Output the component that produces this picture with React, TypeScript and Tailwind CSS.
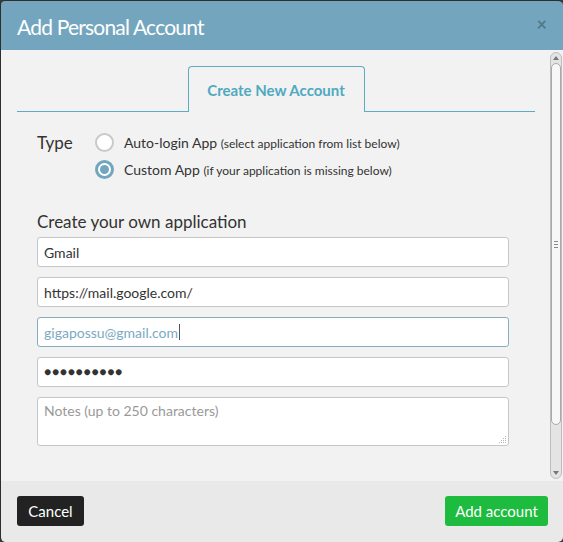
import React from "react";

function Radio({ checked }: { checked?: boolean }) {
  if (checked) {
    return (
      <span className="flex h-[19px] w-[19px] items-center justify-center rounded-full border-[3px] border-[#72a6be] bg-white">
        <span className="h-[9px] w-[9px] rounded-full bg-[#72a6be]" />
      </span>
    );
  }
  return <span className="block h-[19px] w-[19px] rounded-full border-2 border-[#c9c9c9] bg-white" />;
}

export default function App() {
  const font = { fontFamily: "Lato, 'Open Sans', sans-serif" };
  return (
    <div className="h-[542px] w-[563px] bg-[#3a3a3a]" style={font}>
      <div className="flex h-[542px] w-[563px] flex-col overflow-hidden rounded-[5px] border-l border-t border-[#2e2e2e]">
        {/* Header */}
        <div className="flex h-[49px] shrink-0 items-center justify-between bg-[#73a6be] pl-[16px] pr-[16px]">
          <span className="mt-[2px] text-[21px] tracking-[-0.8px] text-white">Add Personal Account</span>
          <span className="mt-[-4px] text-[18px] font-bold leading-none text-[#4f7a8e]">×</span>
        </div>

        {/* Body */}
        <div className="flex h-[431px] shrink-0 bg-[#f2f2f2]">
          <div className="flex-1 pl-[16px] pr-[15px] pt-[16px]">
            {/* Tab row */}
            <div className="flex items-end">
              <div className="h-[1px] flex-1 bg-[#5eacc3]" />
              <div className="flex h-[46px] w-[177px] items-center justify-center rounded-t-[4px] border border-b-0 border-[#5eacc3] pt-[1px]">
                <span className="text-[15px] font-bold text-[#4fa9c1]">Create New Account</span>
              </div>
              <div className="h-[1px] flex-1 bg-[#5eacc3]" />
            </div>

            {/* Type */}
            <div className="mt-[20px] flex pl-[20px]">
              <div className="w-[58px] pt-[1px] text-[17px] leading-[20px] text-[#333]">Type</div>
              <div className="flex flex-col gap-[6px]">
                <div className="flex items-center gap-[10px]">
                  <Radio />
                  <span className="text-[14px] text-[#333]">
                    Auto-login App <span className="text-[12px]">(select application from list below)</span>
                  </span>
                </div>
                <div className="flex items-center gap-[10px]">
                  <Radio checked />
                  <span className="text-[14px] text-[#333]">
                    Custom App <span className="text-[12px]">(if your application is missing below)</span>
                  </span>
                </div>
              </div>
            </div>

            {/* Create your own */}
            <div className="mt-[31px] pl-[20px]">
              <div className="text-[17px] leading-[22px] text-[#333]">Create your own application</div>
              <div className="mt-[4px] flex w-[472px] flex-col gap-[10px]">
                <div className="flex h-[30px] items-center rounded-[3px] border border-[#c4c6c9] bg-white px-[6px] text-[14px] text-[#333]">
                  Gmail
                </div>
                <div className="flex h-[30px] items-center rounded-[3px] border border-[#c4c6c9] bg-white px-[6px] text-[14px] text-[#333]">
                  https://mail.google.com/
                </div>
                <div className="flex h-[30px] items-center rounded-[3px] border border-[#8aadbf] bg-white px-[6px] text-[14px] text-[#7ba9c2]">
                  gigapossu@gmail.com
                  <span className="ml-[1px] inline-block h-[16px] w-[1px] bg-[#555]" />
                </div>
                <div className="flex h-[30px] items-center rounded-[3px] border border-[#c4c6c9] bg-white px-[6px] text-[12px] tracking-[0.7px] text-[#333]">
                  ●●●●●●●●●●
                </div>
                <div className="relative h-[49px] rounded-[3px] border border-[#c4c6c9] bg-white px-[6px] pt-[2px] text-[14px] text-[#999]">
                  Notes (up to 250 characters)
                  <svg className="absolute bottom-[1px] right-[1px]" width="9" height="9" viewBox="0 0 9 9">
                    <g fill="#b8b8b8">
                      <rect x="7" y="1" width="1" height="1" />
                      <rect x="5" y="3" width="1" height="1" />
                      <rect x="7" y="3" width="1" height="1" />
                      <rect x="3" y="5" width="1" height="1" />
                      <rect x="5" y="5" width="1" height="1" />
                      <rect x="7" y="5" width="1" height="1" />
                      <rect x="1" y="7" width="1" height="1" />
                      <rect x="3" y="7" width="1" height="1" />
                      <rect x="5" y="7" width="1" height="1" />
                      <rect x="7" y="7" width="1" height="1" />
                    </g>
                  </svg>
                </div>
              </div>
            </div>
          </div>

          {/* Scrollbar */}
          <div className="mr-[1px] mt-[2px] flex h-[427px] w-[12px] flex-col rounded-[6px] border border-[#bdbdbd] bg-[#e4e4e4]">
            <div className="flex h-[10px] items-center justify-center">
              <svg width="6" height="4" viewBox="0 0 6 4"><path d="M0 4 L3 0 L6 4 Z" fill="#777" /></svg>
            </div>
            <div className="flex h-[362px] items-center justify-center rounded-[5px] border border-[#a9a9a9] bg-[#f7f7f7]">
              <div className="flex flex-col gap-[2px]">
                <div className="h-[1px] w-[4px] bg-[#888]" />
                <div className="h-[1px] w-[4px] bg-[#888]" />
                <div className="h-[1px] w-[4px] bg-[#888]" />
              </div>
            </div>
            <div className="flex-1" />
            <div className="flex h-[10px] items-center justify-center">
              <svg width="6" height="4" viewBox="0 0 6 4"><path d="M0 0 L3 4 L6 0 Z" fill="#777" /></svg>
            </div>
          </div>
        </div>

        {/* Footer */}
        <div className="flex flex-1 items-start justify-between bg-[#e9e9e9] pl-[16px] pr-[15px] pt-[15px]">
          <button className="h-[30px] w-[67px] rounded-[3px] bg-[#222222] text-[15px] text-white">Cancel</button>
          <button className="h-[30px] w-[103px] rounded-[3px] bg-[#1dbb3e] text-[15px] text-white">Add account</button>
        </div>
      </div>
    </div>
  );
}
